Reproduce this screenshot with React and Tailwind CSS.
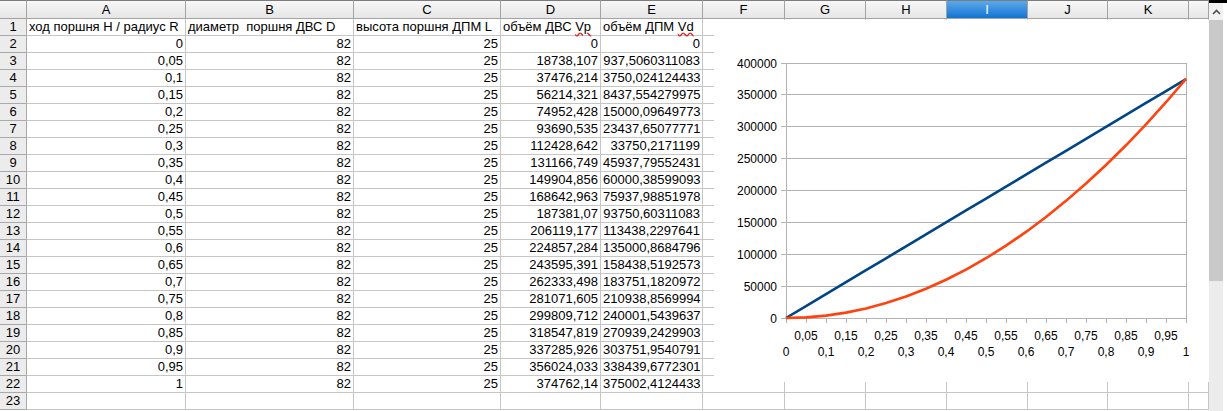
import React from 'react';

const COLS = ['A', 'B', 'C', 'D', 'E', 'F', 'G', 'H', 'I', 'J', 'K', ''];
const SELECTED_COL = 'I';

const HEADINGS = [
  'ход поршня Н / радиус R',
  'диаметр  поршня ДВС D',
  'высота поршня ДПМ L',
];

const VP = [
  '0', '18738,107', '37476,214', '56214,321', '74952,428', '93690,535', '112428,642',
  '131166,749', '149904,856', '168642,963', '187381,07', '206119,177', '224857,284',
  '243595,391', '262333,498', '281071,605', '299809,712', '318547,819', '337285,926',
  '356024,033', '374762,14',
];

const VD = [
  '0', '937,5060311083', '3750,024124433', '8437,554279975', '15000,09649773',
  '23437,65077771', '33750,2171199', '45937,79552431', '60000,38599093', '75937,98851978',
  '93750,60311083', '113438,2297641', '135000,8684796', '158438,5192573', '183751,1820972',
  '210938,8569994', '240001,5439637', '270939,2429903', '303751,9540791', '338439,6772301',
  '375002,4124433',
];

const ratio = (i) => (i === 0 ? '0' : i === 20 ? '1' : String(i / 20).replace('.', ','));
const num = (s) => parseFloat(s.replace(',', '.'));

const cell = 'h-[17px] border-r border-b border-[#c6c6c6] px-[2px] leading-[16px] whitespace-pre';

// spell-check squiggle under unknown words
const Squiggle = ({ children }) => (
  <span className="underline decoration-wavy decoration-[#e02020] underline-offset-[1px]">{children}</span>
);

function Header() {
  return (
    <>
      <div className="h-[19px] border-t border-b border-r border-t-[#7c7c7c] border-[#a3a3a3] bg-gradient-to-b from-[#f7f7f7] to-[#e6e6e6]" />
      {COLS.map((c, i) => (
        <div
          key={i}
          className={
            'h-[19px] border-t border-b border-r border-t-[#7c7c7c] border-[#a3a3a3] text-center leading-[17px] ' +
            (c === SELECTED_COL
              ? 'bg-gradient-to-b from-[#5aa9ea] to-[#0a74d0] text-white'
              : 'bg-gradient-to-b from-[#f7f7f7] to-[#e6e6e6] text-black')
          }
        >
          {c}
        </div>
      ))}
    </>
  );
}

function Row({ n, values, align = 'right' }) {
  return (
    <>
      <div className="h-[17px] border-r border-b border-[#a9a9a9] bg-[#ececec] text-center leading-[16px]">{n}</div>
      {COLS.map((_, i) => (
        <div key={i} className={cell + (align === 'right' ? ' text-right' : ' text-left')}>
          {values[i] ?? ''}
        </div>
      ))}
    </>
  );
}

function Chart() {
  const x0 = 72;
  const yb = 298;
  const h = 255;
  const px = (i) => x0 + i * 20;
  const py = (v) => yb - (v / 400000) * h;
  const blue = VP.map((v, i) => `${px(i)},${py(num(v)).toFixed(2)}`).join(' ');
  const orange = VD.map((v, i) => `${px(i)},${py(num(v)).toFixed(2)}`).join(' ');
  const ticks = Array.from({ length: 21 }, (_, i) => i);
  const levels = [0, 50000, 100000, 150000, 200000, 250000, 300000, 350000, 400000];

  return (
    <div className="absolute left-[714px] top-[20px] w-[495px] h-[362px] bg-white">
      <svg width="495" height="362" style={{ fontFamily: '"Liberation Sans", Arial, sans-serif' }}>
        {levels.map((l) => (
          <g key={l}>
            <line x1={x0 - 5} x2={x0 + 400} y1={py(l)} y2={py(l)} stroke="#b3b3b3" strokeWidth="1" shapeRendering="crispEdges" />
            <text x="63" y={py(l) + 4.5} fontSize="12" textAnchor="end" fill="#000">{l}</text>
          </g>
        ))}
        <line x1={x0} x2={x0} y1={py(400000)} y2={yb} stroke="#b3b3b3" shapeRendering="crispEdges" />
        <line x1={x0 + 400} x2={x0 + 400} y1={py(400000)} y2={yb} stroke="#b3b3b3" shapeRendering="crispEdges" />
        {ticks.map((i) => (
          <g key={i}>
            <line x1={px(i)} x2={px(i)} y1={yb} y2={yb + 5} stroke="#b3b3b3" shapeRendering="crispEdges" />
            <text x={px(i)} y={i % 2 ? 320 : 336} fontSize="12" textAnchor="middle" fill="#000">{ratio(i)}</text>
          </g>
        ))}
        <polyline points={blue} fill="none" stroke="#004586" strokeWidth="2.6" strokeLinejoin="round" />
        <polyline points={orange} fill="none" stroke="#ff420e" strokeWidth="2.6" strokeLinejoin="round" />
      </svg>
    </div>
  );
}

function Scrollbar() {
  return (
    <div className="w-[18px] h-[411px] shrink-0 flex flex-col bg-white">
      <div className="h-[3px] w-full bg-black" />
      <div className="flex w-[14px] flex-1 flex-col bg-[#ececec]">
        <div className="flex h-[17px] items-center justify-center bg-[#f2f2f2]">
          <svg width="9" height="6" viewBox="0 0 9 6">
            <path d="M1 5 L4.5 1.5 L8 5" fill="none" stroke="#505050" strokeWidth="1.6" />
          </svg>
        </div>
        <div className="h-[261px] bg-[#c9c9c9]" />
      </div>
    </div>
  );
}

export default function App() {
  const rows = [];
  for (let i = 0; i <= 20; i++) {
    rows.push(<Row key={i} n={i + 2} values={[ratio(i), '82', '25', VP[i], VD[i]]} />);
  }

  return (
    <div
      className="flex w-[1227px] h-[411px] overflow-hidden bg-white text-[13px] text-black"
      style={{ fontFamily: '"Liberation Sans", Arial, sans-serif' }}
    >
      <div className="relative w-[1209px] shrink-0">
        <div className="grid grid-cols-[27px_159px_168px_147px_100px_102px_82px_81px_81px_81px_80px_81px_20px]">
          <Header />
          <Row
            n={1}
            align="left"
            values={[
              ...HEADINGS,
              <>объём ДВС <Squiggle>Vp</Squiggle></>,
              <>объём ДПМ <Squiggle>Vd</Squiggle></>,
            ]}
          />
          {rows}
          <Row n={23} values={[]} />
        </div>
        <Chart />
      </div>
      <Scrollbar />
    </div>
  );
}
